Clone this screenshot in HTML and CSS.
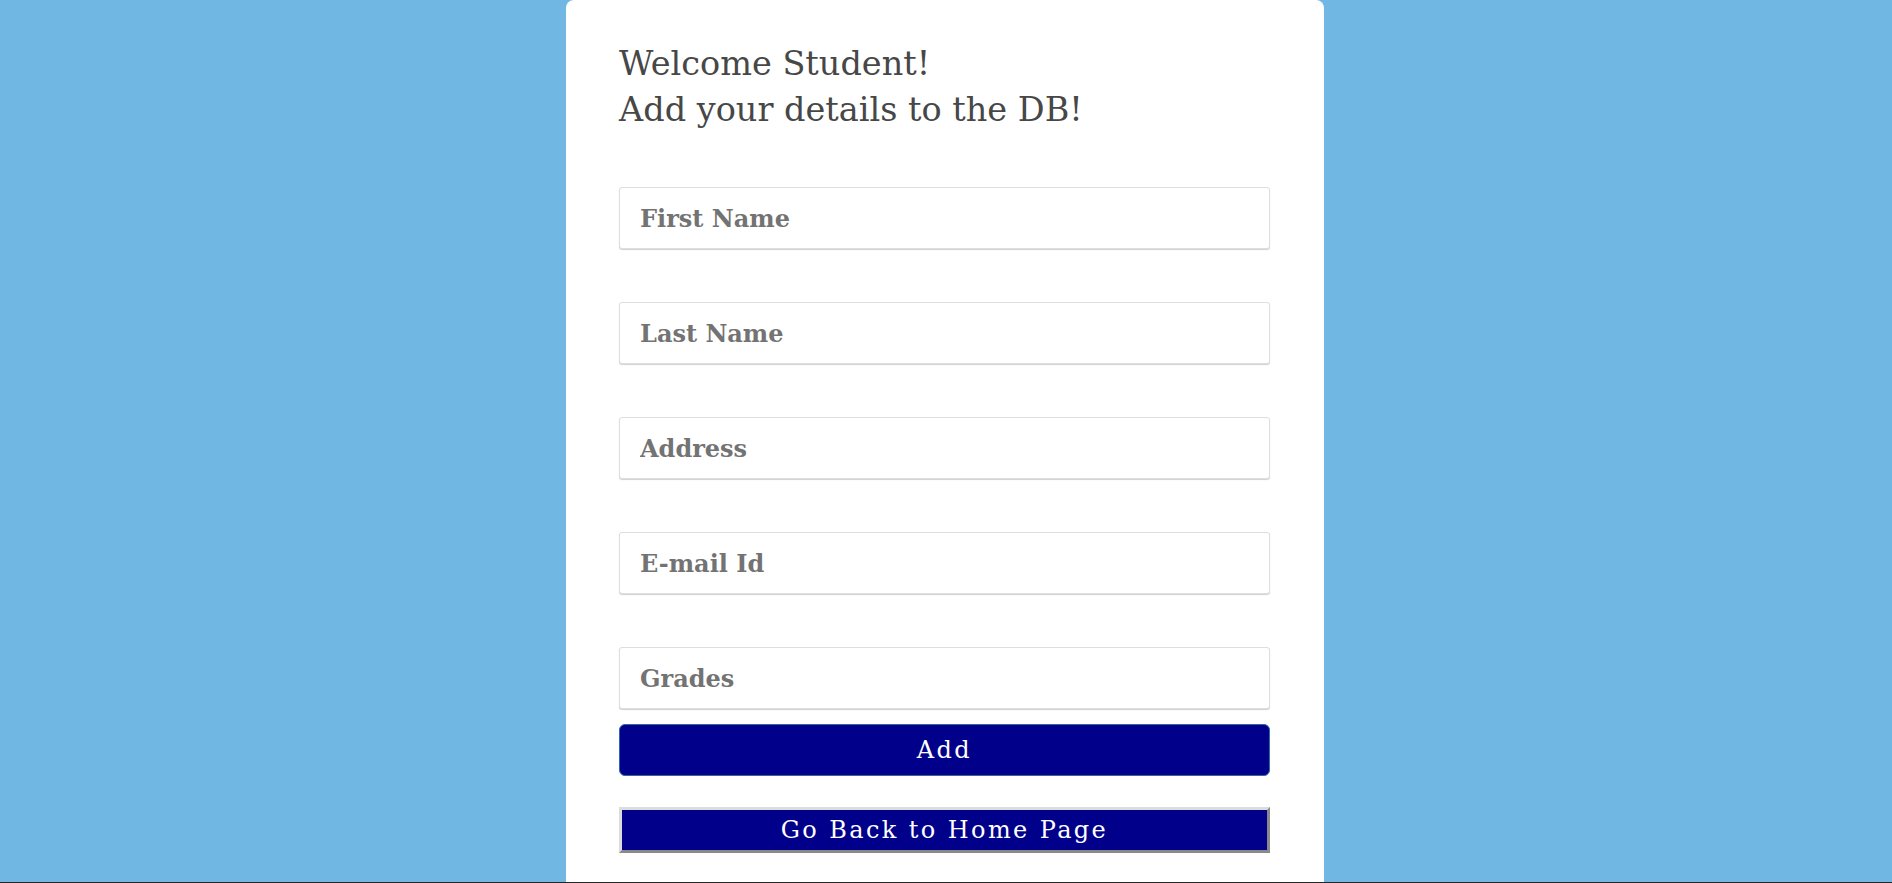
FILE: index.html
```html
<!DOCTYPE html>
<html lang="en">
<head>
<meta charset="utf-8">
<title>Add Student</title>
<link rel="stylesheet" href="styles.css">
</head>
<body>
<main class="page">
  <section class="card">
    <h1 class="title">Welcome Student!<br>Add your details to the DB!</h1>
    <form class="form">
      <input class="field" type="text" placeholder="First Name">
      <input class="field" type="text" placeholder="Last Name">
      <input class="field" type="text" placeholder="Address">
      <input class="field" type="text" placeholder="E-mail Id">
      <input class="field field-last" type="text" placeholder="Grades">
      <button class="btn-add" type="button">Add</button>
      <button class="btn-back" type="button">Go Back to Home Page</button>
    </form>
  </section>
</main>
<footer class="footer"></footer>
</body>
</html>
```
FILE: styles.css
```css
html, body {
  margin: 0;
  padding: 0;
}
body {
  background: #71b7e4;
  font-family: "DejaVu Serif", "Liberation Serif", serif;
}
.page {
  display: flex;
  justify-content: center;
  min-height: 882px;
  padding-right: 2px;
}
.card {
  box-sizing: border-box;
  width: 758px;
  background: #ffffff;
  border-radius: 8px 8px 0 0;
  padding: 41px 54px 0 53px;
}
.title {
  margin: 0;
  font-size: 33.5px;
  line-height: 46px;
  font-weight: normal;
  color: #474747;
}
.form {
  display: flex;
  flex-direction: column;
  margin-top: 54px;
}
.field {
  box-sizing: border-box;
  width: 100%;
  height: 62px;
  margin: 0 0 53px;
  padding: 0 20px;
  border: 1px solid #dedede;
  border-radius: 3px;
  box-shadow: 0 1px 1px #d0d0d0;
  background: #ffffff;
  font-family: "DejaVu Serif", "Liberation Serif", serif;
  font-size: 24px;
  font-weight: bold;
  color: #555;
  outline: none;
}
.field::placeholder {
  color: #737373;
  opacity: 1;
}
.field-last {
  margin-bottom: 15px;
}
.btn-add {
  box-sizing: border-box;
  height: 52px;
  width: 100%;
  margin: 0 0 31px;
  background: #00008b;
  border: 1px solid #2a6aa3;
  border-radius: 6px;
  color: #ffffff;
  font-family: "DejaVu Serif", "Liberation Serif", serif;
  font-size: 24px;
  letter-spacing: 2.4px;
  padding: 0;
  cursor: pointer;
}
.btn-back {
  box-sizing: border-box;
  height: 46px;
  width: 100%;
  margin: 0;
  background: #00008b;
  border-style: solid;
  border-width: 3px;
  border-color: #dcdcdc #8a8a8a #8a8a8a #dcdcdc;
  border-radius: 0;
  color: #ffffff;
  font-family: "DejaVu Serif", "Liberation Serif", serif;
  font-size: 24px;
  letter-spacing: 2.4px;
  padding: 0;
  cursor: pointer;
}
.footer {
  height: 40px;
  background: #262626;
}
```
